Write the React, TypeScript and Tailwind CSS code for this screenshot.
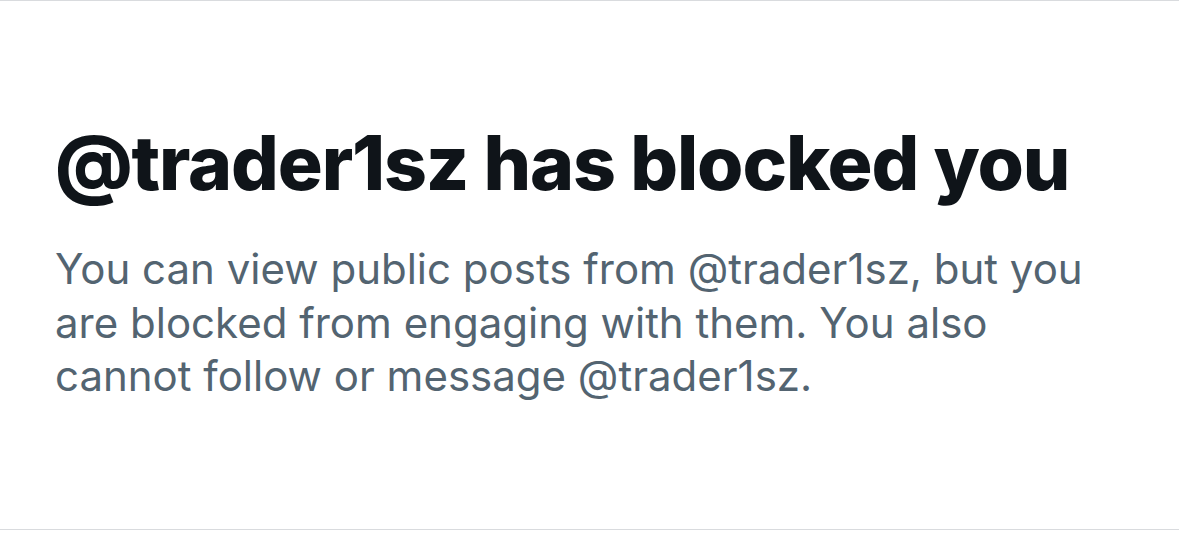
import React from 'react';

export default function App() {
  return (
    <div className="w-[1179px] h-[539px] bg-white flex flex-col" style={{ fontFamily: 'Inter, "Liberation Sans", sans-serif' }}>
      <div className="h-px bg-[#d9dbde]" />
      <div className="flex-1 px-[55px] pt-[118px]">
        <h1 className="text-[75px] leading-[88px] font-extrabold tracking-[-0.015em] text-[#0f1419]">
          @trader1sz has blocked you
        </h1>
        <p className="mt-[35px] text-[42px] leading-[53.5px] text-[#536471] max-w-[1040px]">
          You can view public posts from @trader1sz, but you are blocked from engaging with them. You also cannot follow or message @trader1sz.
        </p>
      </div>
      <div className="h-px bg-[#d9dbde] mb-[9px]" />
    </div>
  );
}
